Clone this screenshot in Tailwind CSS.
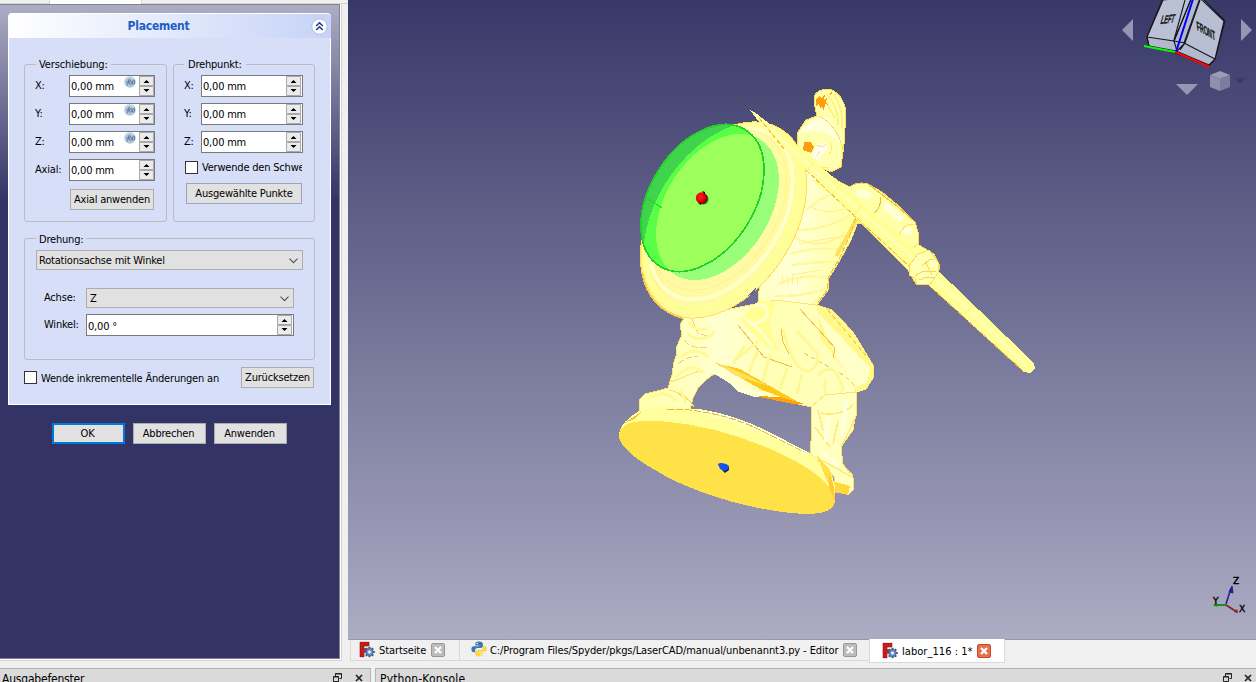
<!DOCTYPE html>
<html lang="de">
<head>
<meta charset="utf-8">
<title>Placement</title>
<script src="https://cdn.jsdelivr.net/npm/@tailwindcss/browser@4"></script>
</head>
<body class="w-[1256px] h-[682px] overflow-hidden bg-[#f0f0f0] text-black text-[11px] leading-[14px] tracking-[-0.2px] font-['DejaVu_Sans_Condensed','DejaVu_Sans',sans-serif] whitespace-nowrap">

<svg class="hidden">
  <defs>
    <symbol id="spin" viewBox="0 0 15 20">
      <path d="M.5.5h14v9H.5zM.5 10.500h14v9H.5z" fill="#ececec" stroke="#a9a9a9"/>
      <path d="M4.500 7L7.500 4l3 3zM4.500 13h6l-3 3z" fill="#000"/>
    </symbol>
    <symbol id="fx" viewBox="0 0 12 12">
      <circle cx="6" cy="6" r="5.700" fill="#b4c5d8"/>
      <path d="M1.500 3a5.500 5.500 0 0 1 9 0" fill="none" stroke="#d3dfec" stroke-width="1.500"/>
      <path d="M2.500 9.500Q4 9 4.200 6T6 3M2.500 6h3M6.500 4Q5 6 6 8.500M7 8.500l2.500-4M7.500 4.500L9 8.500M10 3.800q1.200 2 0 4.500" fill="none" stroke="#4a6f9c" stroke-width=".9"/>
    </symbol>
    <symbol id="freecad" viewBox="0 0 16 16">
      <path d="M1 .5h9v4H5v2.500h3v3H5v5.500H1z" fill="#c91c1c" stroke="#8c1010" stroke-width=".6"/>
      <g stroke="#3d5f96" stroke-width="2.200"><path d="M10.500 5.200v10.600M5.200 10.500h10.600M6.800 6.800l7.400 7.400M14.200 6.800l-7.400 7.400"/></g>
      <circle cx="10.500" cy="10.500" r="3.600" fill="#6d8fc4" stroke="#3d5f96" stroke-width=".8"/>
      <circle cx="10.500" cy="10.500" r="1.500" fill="#f4f4f4"/>
    </symbol>
    <symbol id="python" viewBox="0 0 16 16">
      <path d="M7.900.5C5 .5 4.300 1.600 4.300 2.900v1.700h3.900v.6H2.700C1.200 5.200.4 6.500.4 8.200s.9 3 2.200 3H4V9.400c0-1.300 1.100-2.400 2.400-2.400h3.500c1.100 0 2-.9 2-2V2.900C11.900 1.400 10.700.5 7.900.5z" fill="#3a77ad"/>
      <path d="M8.200 15.500c2.900 0 3.600-1.100 3.600-2.400v-1.700H7.900v-.6h5.500c1.500 0 2.300-1.300 2.300-3s-.9-3-2.200-3h-1.400v1.800c0 1.300-1.100 2.400-2.400 2.400H6.200c-1.100 0-2 .9-2 2v2.100c0 1.500 1.200 2.400 4 2.400z" fill="#fdd648"/>
      <circle cx="6.100" cy="2.500" r=".8" fill="#fff"/><circle cx="10" cy="13.500" r=".8" fill="#fff"/>
    </symbol>
    <symbol id="restore" viewBox="0 0 9 9">
      <path d="M2.500 3.500v-3h6v5h-2M2.500 1h6M.5 3.500h5v5h-5zM.5 4h5" fill="none" stroke="#222"/>
    </symbol>
    <symbol id="cross" viewBox="0 0 8 8"><path d="M1 1l6 6M7 1L1 7" stroke="#222" stroke-width="1.700"/></symbol>
    <symbol id="chev" viewBox="0 0 9 6"><path d="M.5.7l4 4 4-4" fill="none" stroke="#555" stroke-width="1.200"/></symbol>
  </defs>
</svg>

<div class="flex h-[668px]">
  <!-- Task panel -->
  <aside class="w-[348px] shrink-0">
    <div class="h-[4px] flex border-b border-[#d4d4d4]">
      <div class="w-[49px]"></div>
      <div class="w-[93px] bg-white border-x border-[#d4d4d4] h-[4px]"></div>
    </div>
    <div class="w-[342px] h-[657px] bg-white border-r border-b border-[#d4d4d4]">
    <div class="w-[340px] h-[655px] border-t border-r border-b border-[#82828c] bg-[linear-gradient(#adadc4_0px,#333366_196px)] pt-[8px] pl-[8px]">
      <div class="w-[323px] h-[25px] rounded-t-[4px] border-t border-l border-white bg-linear-to-r from-white to-[#c6d3f7] flex items-center">
        <div class="w-[299px] text-center text-[12px] font-bold text-[#215dc6] tracking-[-0.25px]">Placement</div>
        <svg class="ml-[3px]" width="17" height="17" viewBox="0 0 17 17"><circle cx="8.500" cy="8.500" r="7.700" fill="#fff" stroke="#b5bcd8"/><path d="M5.200 8l3.300-3.200L11.800 8M5.200 12l3.300-3.200 3.300 3.200" fill="none" stroke="#183c94" stroke-width="1.600"/></svg>
      </div>
      <div class="w-[323px] h-[367px] bg-[#d6dff7] border border-t-0 border-white pl-[15px] pt-[26px]">
        <div class="flex gap-[6px]">
          <fieldset class="w-[143px] h-[158px] border border-[#b9bcc0] rounded-[3px] pl-[11px]">
            <div class="w-fit bg-[#d6dff7] px-[3px] -mt-[7px] h-[14px] tracking-[-0.12px]">Verschiebung:</div>
            <div class="flex flex-col gap-[6px] mt-[3px]">
              <div class="flex"><span class="w-[33px] pt-[4px] -ml-px mr-px">X:</span><div class="w-[86px] h-[22px] bg-white border border-[#7a7a7a] flex pl-px"><span class="w-[53px] pt-[4px]">0,00 mm</span><svg width="12" height="12"><use href="#fx"/></svg><svg class="ml-[3px]" width="15" height="20"><use href="#spin"/></svg></div></div>
              <div class="flex"><span class="w-[33px] pt-[4px] -ml-px mr-px">Y:</span><div class="w-[86px] h-[22px] bg-white border border-[#7a7a7a] flex pl-px"><span class="w-[53px] pt-[4px]">0,00 mm</span><svg width="12" height="12"><use href="#fx"/></svg><svg class="ml-[3px]" width="15" height="20"><use href="#spin"/></svg></div></div>
              <div class="flex"><span class="w-[33px] pt-[4px] -ml-px mr-px">Z:</span><div class="w-[86px] h-[22px] bg-white border border-[#7a7a7a] flex pl-px"><span class="w-[53px] pt-[4px]">0,00 mm</span><svg width="12" height="12"><use href="#fx"/></svg><svg class="ml-[3px]" width="15" height="20"><use href="#spin"/></svg></div></div>
              <div class="flex"><span class="w-[33px] pt-[4px] -ml-px mr-px">Axial:</span><div class="w-[86px] h-[22px] bg-white border border-[#7a7a7a] flex pl-px"><span class="w-[68px] pt-[4px]">0,00 mm</span><svg width="15" height="20"><use href="#spin"/></svg></div></div>
            </div>
            <button class="ml-[34px] mt-[8px] w-[84px] h-[21px] block bg-[#e1e1e1] border border-[#adadad]">Axial anwenden</button>
          </fieldset>
          <fieldset class="w-[142px] h-[158px] border border-[#b9bcc0] rounded-[3px] pl-[10px]">
            <div class="w-fit bg-[#d6dff7] px-[4px] -mt-[7px] h-[14px]">Drehpunkt:</div>
            <div class="flex flex-col gap-[6px] mt-[3px]">
              <div class="flex"><span class="w-[17px] pt-[4px]">X:</span><div class="w-[102px] h-[22px] bg-white border border-[#7a7a7a] flex pl-px"><span class="w-[83px] pt-[4px]">0,00 mm</span><svg width="15" height="20"><use href="#spin"/></svg></div></div>
              <div class="flex"><span class="w-[17px] pt-[4px]">Y:</span><div class="w-[102px] h-[22px] bg-white border border-[#7a7a7a] flex pl-px"><span class="w-[83px] pt-[4px]">0,00 mm</span><svg width="15" height="20"><use href="#spin"/></svg></div></div>
              <div class="flex"><span class="w-[17px] pt-[4px]">Z:</span><div class="w-[102px] h-[22px] bg-white border border-[#7a7a7a] flex pl-px"><span class="w-[83px] pt-[4px]">0,00 mm</span><svg width="15" height="20"><use href="#spin"/></svg></div></div>
            </div>
            <div class="flex mt-[8px] ml-[1px]"><span class="size-[13px] bg-white border border-[#333]"></span><span class="ml-[4px] w-[100px] overflow-hidden">Verwende den Schwe</span></div>
            <button class="ml-[2px] mt-[8px] w-[116px] h-[21px] block bg-[#e1e1e1] border border-[#9aa7b5]">Ausgewählte Punkte</button>
          </fieldset>
        </div>
        <fieldset class="mt-[16px] w-[291px] h-[122px] border border-[#b9bcc0] rounded-[3px] pl-[11px]">
          <div class="w-fit bg-[#d6dff7] px-[3px] -mt-[6px] h-[14px]">Drehung:</div>
          <div class="mt-[3px] w-[267px] h-[20px] bg-[#e1e1e1] border border-[#adadad] flex items-center justify-between pl-[2px] pr-[4px] pt-[2px]"><span>Rotationsachse mit Winkel</span><svg width="9" height="6"><use href="#chev"/></svg></div>
          <div class="mt-[18px] ml-[8px] flex"><span class="w-[42px] pt-[3px]">Achse:</span><div class="w-[208px] h-[20px] bg-[#e1e1e1] border border-[#adadad] flex items-center justify-between pl-[3px] pr-[4px] pt-[2px]"><span>Z</span><svg width="9" height="6"><use href="#chev"/></svg></div></div>
          <div class="mt-[6px] ml-[8px] flex"><span class="w-[42px] pt-[4px]">Winkel:</span><div class="w-[208px] h-[22px] bg-white border border-[#7a7a7a] flex justify-between pl-px pr-px"><span class="pt-[5px]">0,00 °</span><svg width="15" height="20"><use href="#spin"/></svg></div></div>
        </fieldset>
        <div class="flex mt-[7px]"><span class="mt-[4px] size-[13px] bg-white border border-[#333]"></span><span class="mt-[5px] ml-[4px] w-[200px]">Wende inkrementelle Änderungen an</span><button class="w-[73px] h-[21px] bg-[#e1e1e1] border border-[#adadad] pt-px">Zurücksetzen</button></div>
      </div>
      <div class="flex gap-[8px] mt-[18px] ml-[44px]">
        <button class="w-[73px] h-[21px] bg-[#e1e1e1] border-2 border-[#0078d7] pt-px pr-[2px]">OK</button>
        <button class="w-[73px] h-[21px] bg-[#e1e1e1] border border-[#adadad] pt-px pr-[2px]">Abbrechen</button>
        <button class="w-[73px] h-[21px] bg-[#e1e1e1] border border-[#adadad] pt-px pr-[2px]">Anwenden</button>
      </div>
    </div>
    </div>
  </aside>

  <!-- 3D view and document tabs -->
  <main class="w-[908px]">
    <svg class="block" width="908" height="640" viewBox="348 0 908 640">
      <defs>
        <linearGradient id="bg" x1="0" y1="0" x2="0" y2="1"><stop offset="0" stop-color="#383869"/><stop offset="1" stop-color="#acacc4"/></linearGradient>
        <linearGradient id="sh" x1="1" y1="0" x2="0" y2="1"><stop offset="0" stop-color="#ffff8c"/><stop offset=".3" stop-color="#fffba4"/><stop offset=".75" stop-color="#fff9a4"/><stop offset="1" stop-color="#ffd733"/></linearGradient>
        <linearGradient id="torso" x1="0" y1="0" x2="1" y2=".2"><stop offset="0" stop-color="#ffffbc"/><stop offset=".4" stop-color="#ffffd8"/><stop offset=".8" stop-color="#ffffa6"/></linearGradient>
        <linearGradient id="leg" x1="0" y1="0" x2="1" y2="0"><stop offset="0" stop-color="#ffffac"/><stop offset=".35" stop-color="#ffffd0"/><stop offset=".6" stop-color="#ffffb4"/><stop offset="1" stop-color="#ffffc4"/></linearGradient>
        <radialGradient id="red" cx=".4" cy=".4" r=".6"><stop offset="0" stop-color="#ff2020"/><stop offset=".7" stop-color="#e80000"/><stop offset="1" stop-color="#700"/></radialGradient>
        <clipPath id="cs"><ellipse cx="724" cy="220" rx="70" ry="107" transform="rotate(32.800 724 220)"/></clipPath>
        <clipPath id="cl"><ellipse cx="702.500" cy="198" rx="52.400" ry="81" transform="rotate(32.400 702.500 198)"/></clipPath>
      </defs>
      <rect x="348" width="908" height="640" fill="url(#bg)"/>
      <rect x="348" y="639" width="908" height="1" fill="#9a9a9e"/>

      <g shape-rendering="crispEdges">
        <!-- raised arm -->
        <path d="M838 181L850 187Q858 181 868 184L882 192L900 207L915 222L918 232L919 245L934 254L940 266L937 278L928 285L916 284L908 270L893 255L862 224L850 222L838 205Z" fill="#ffffa8" stroke="#ffd94a"/>
        <path d="M857 196Q863 190 871 198M884 204L902 220M902 232Q905 228 911 232" stroke="#ffffda" stroke-width="7" fill="none"/>
        <path d="M880 197Q882 208 873 214M868 184L898 207L915 222" fill="none" stroke="#f2b93d"/>
        <path d="M917 243L912 252M898 237Q904 222 914 225" fill="none" stroke="#ffe05c"/>
        <!-- torso -->
        <path d="M795 150L817 168L836 179L861 214L851 240L840 260L829 278L828 290L817 305L832 310L853 332L873 365L873 378L866 389L857 392L810 406L770 388L758 295Z" fill="url(#torso)" stroke="#ffe66a"/>
        <path d="M806 211Q820 196 838 193M798 230Q826 230 852 214M794 237Q820 252 846 233M790 254Q815 246 842 250M791 266Q805 262 838 262M778 284Q807 272 829 279M774 296Q800 297 827 289M768 304Q800 318 820 298" fill="none" stroke="#fff99c" stroke-width="2.500"/>
        <path d="M811 207Q828 216 850 207M799 244Q822 239 849 236M792 275L821 270M782 284v-9M787 285v-9M792 284v-9M797 285v-8" fill="none" stroke="#fff08c"/>
        <path d="M857 218L848 235L836 256" fill="none" stroke="#ffe25c" stroke-width="4"/>
        <path d="M856 217L849 238L838 261L829 276L827 290L817 304" fill="none" stroke="#f5b942" stroke-dasharray="6 2"/>
        <path d="M812 180L838 184L851 206L842 198L822 190Z" fill="#ffff98"/>
        <!-- head -->
        <path d="M815 107L814 97Q817 89 828 89Q840 91 845 107L845 128L844 144L841 167L831 172L812 164L797 145L798 132L806 120L817 116Z" fill="#ffffb0" stroke="#ffdf4a"/>
        <path d="M799 133Q813 113 829 118Q841 134 843 149Q828 126 806 132Z" fill="#ffffdc"/>
        <path d="M834 94Q844 110 842 129M827 94Q839 109 838 125M823 97L835 118" fill="none" stroke="#fff07c" stroke-width="1.500"/>
        <path d="M819 116Q838 126 843 150" fill="none" stroke="#ffe04c"/>
        <path d="M816 100l4-5 1 4 4-5-1 6 4-4-2 6 2 3-3-1-1 7-2-4-2 1-1-5-3 3zM829 94l3-2-1 4zM804 142L811 142L814 147L811 153L803 150Z" fill="#ff9d0c"/>
        <path d="M817 145l8-3 3 6-6 8-5 4-5-4z" fill="#fffdf0"/>
        <path d="M817 145l5 2 5-3M817 156l3-5M829 142q6 6 0 12M812 161q9 9 17 6" fill="none" stroke="#ffe77a"/>
        <!-- rear leg, skirt and thigh -->
        <path d="M684 318L680 325L682 335L676 348L677 353L674 362L672 375L668 388L657 391L645 394L640 399L639 413L690 410L693 398L698 388L706 380L714 374L720 375L745 392L811 407L812 430L811 454L835 478L839 487L852 485L853 475L840 463L841 447L853 430L856 413L855 390L873 378L872 365L838 323L816 305L775 300L710 313Z" fill="url(#leg)" stroke="#ffe66a"/>
        <path d="M817 306L833 311L853 332L873 365L873 378L865 390L857 392L853 382L820 338Z" fill="#fff98c"/>
        <path d="M816 312L844 340L870 368L867 383L856 387L838 360Z" fill="#ffffc8"/>
        <path d="M800 309L835 348L833 358M781 329L783 342L791 358M738 325L764 357L792 367" fill="none" stroke="#f2c048"/>
        <path d="M804 353L845 376L855 386M827 309L848 334L868 358" fill="none" stroke="#f7c850" stroke-dasharray="5 3"/>
        <path d="M783 330Q788 350 797 365M797 331L817 353Q821 364 810 371Q798 372 790 353M771 314L766 333L777 348M818 376Q827 365 836 372L843 388Q839 402 832 403Q822 391 826 380M759 341L735 360M770 354L763 381M787 368L780 389M802 374L797 394M745 345L733 364M758 350L749 372" fill="none" stroke="#fff896" stroke-width="3"/>
        <path d="M740 320L758 301L776 301L770 324L777 350L765 346Z" fill="#ffff94"/>
        <path d="M754 306Q766 302 768 312Q764 324 750 324M744 318L760 330L772 346" fill="none" stroke="#ffffd0" stroke-width="3"/>
        <path d="M715 363L740 369L800 403L792 401L762 390Z" fill="#ffc91c"/>
        <path d="M715 362L735 370L769 386L736 376Z" fill="#ffe25b"/>
        <path d="M755 396L780 397L805 404L793 404Z" fill="#ffa20b"/>
        <path d="M712 372L727 371L738 383L770 395L755 397L739 392L729 383Z" fill="#ffffcf"/>
        <path d="M684 340Q692 350 708 347M692 319L698 333L710 337M678 364Q687 356 698 357" fill="none" stroke="#f9d25e" stroke-dasharray="7 2"/>
        <path d="M671 382L699 371M669 390Q686 393 694 407M678 394L690 401" fill="none" stroke="#ffdf68"/>
        <path d="M689 322q7 11 19 6M688 334q12 11 27-2M681 357q14-12 27 0M676 378q15-18 27-5M651 397q14-8 25 4M681 389L686 404" fill="none" stroke="#fff996" stroke-width="3"/>
        <!-- front shin and foot -->
        <path d="M811 407L812 430L810 453L835 477L834 488L848 495L853 490L853 478L843 464L841 447L849 431L857 414L856 392L825 395Z" fill="#ffffc0" stroke="#ffe26c"/>
        <path d="M815 427L830 447M821 413Q840 417 853 405M838 421L833 444M818 410l5 20M823 461L850 476" fill="none" stroke="#ffea78" stroke-width="1.500"/>
        <path d="M828 418L826 442M846 400L842 436M822 452L838 466" fill="none" stroke="#ffffe0" stroke-width="4"/>
        <path d="M832 481L850 486L848 495L834 492Z" fill="#ffd83e"/>
        <!-- base -->
        <path d="M619 434Q621 421 641 410L665 407L700 409Q735 415 765 430L808 452L830 472Q837 485 835 499L830 507Q822 514 805 514Z" fill="#ffff9e"/>
        <path d="M700 409Q735 415 765 430L808 452L804 455Q760 428 698 412Z" fill="#ffffc8"/>
        <path d="M667 409L690 410Q730 415 760 430L804 452" fill="none" stroke="#edb33a" stroke-dasharray="7 2"/>
        <path d="M623 424L641 412L636 418Z" fill="#f9bd30"/>
        <path d="M816 454L830 470L835 491L828 483Z" fill="#ffe04b"/>
        <path d="M619 437C618 422 638 420 660 421C720 425 780 450 810 470C828 482 836 493 835 502C832 512 822 514 803 514C752 511 690 492 655 470C635 459 620 446 619 437Z" fill="#ffe148"/>
        <path d="M829 472L834 487L835 501L829 487Z" fill="#ffc935"/>

        <!-- shield -->
        <ellipse cx="723.500" cy="220" rx="70.500" ry="107.500" transform="rotate(32.800 723.500 220)" fill="url(#sh)" stroke="#ffe04d"/>
        <g clip-path="url(#cs)" fill="none">
          <ellipse cx="723" cy="217" rx="65" ry="102" transform="rotate(32.800 723 217)" stroke="#ffff98" stroke-width="7"/>
          <ellipse cx="721" cy="214" rx="60" ry="94" transform="rotate(32.800 721 214)" stroke="#ffffc8" stroke-width="4"/>
          <ellipse cx="719" cy="210" rx="57" ry="88" transform="rotate(32.800 719 210)" stroke="#fff294"/>
        </g>
        <path d="M642 272Q649 309 683 318" fill="none" stroke="#ffcf45" stroke-width="2"/>
        <path d="M746 297L756 288L755 293Z" fill="#686891"/>

        <!-- bounding cylinder -->
        <ellipse cx="702.500" cy="198" rx="52.400" ry="81" transform="rotate(32.400 702.500 198)" fill="#3fd44b"/>
        <g clip-path="url(#cl)"><ellipse cx="724" cy="218" rx="68" ry="105" transform="rotate(32.800 724 218)" fill="#58ff46"/></g>
        <ellipse cx="717.500" cy="207" rx="52" ry="80" transform="rotate(32.400 717.500 207)" fill="#99ff7b"/>
        <g clip-path="url(#cl)"><ellipse cx="717.500" cy="207" rx="52" ry="80" transform="rotate(32.400 717.500 207)" fill="#9cff5b"/></g>
        <ellipse cx="702.500" cy="198" rx="52" ry="80.500" transform="rotate(32.400 702.500 198)" fill="none" stroke="#20cf28" stroke-width="1.700"/>
        <path d="M645 197L662 208" stroke="#20d529"/>

        <!-- spear -->
        <path d="M750 110L754 112L790 139L861 202L925 258L1034 363L1035 369L1030 373L1024 372L910 268L854 217L804 167L765 130Z" fill="#ffff98"/>
        <path d="M756 115L806 163L855 206L921 265L1028 366" fill="none" stroke="#ffffb4" stroke-width="3"/>
        <path d="M759 118L785 150M806 170L862 223L910 267M932 288L1023 371" fill="none" stroke="#f4bd3d" stroke-dasharray="5 2"/>
        <path d="M813 163L807 171M842 184L832 194M862 205L854 216M973 306L965 314" fill="none" stroke="#fff07c"/>
        <!-- hand -->
        <path d="M909 266L918 254L929 250L939 263L938 273L930 284L917 284L915 278L909 275Z" fill="#ffffb4" stroke="#ffdc58"/>
        <path d="M922 266l7-6 6-1M915 276q8-7 21-4M919 280l8-3 7 1M926 263l6 12" fill="none" stroke="#f9d45c"/>
      </g>

      <circle cx="703" cy="199" r="5.500" fill="#3f5d27"/><circle cx="701.500" cy="198" r="5.700" fill="url(#red)"/><path d="M702 191l3 1v3zM698 203l3 2v-2z" fill="#111"/>
      <path d="M718 464L722 470L725 473L729 470V466Z" fill="#06235c"/><path d="M718 464Q720 462 726 464Q729 465 729 468L725 471L720 469Z" fill="#1255f0"/>

      <!-- navigation cube -->
      <g stroke="#15151d" stroke-width="1.100" stroke-linejoin="round">
        <path d="M1163-2L1147 37L1149 46L1175 53L1209 66L1215 59L1225 21L1202-2Z" fill="#b3b9cc"/>
        <path d="M1163 0L1147 37L1174 41L1192-3Z" fill="#bbc1d4"/>
        <path d="M1201-1L1224 21L1215 59L1184 43L1200-2Z" fill="#b9bfd3"/>
        <path d="M1191-1L1174 41L1177 51L1185 43L1200 0M1174 41L1185 43L1180 50M1147 37L1149 46L1176 51L1209 65L1215 59M1185 0L1174 40" fill="none"/>
      </g>
      <text transform="matrix(.9 -.1 -.28 1 1160 24)" font-family="Liberation Sans" font-size="12" font-weight="bold" textLength="15" lengthAdjust="spacingAndGlyphs" stroke="#171719" stroke-width=".4" fill="#171719">LEFT</text>
      <text transform="matrix(.84 .48 .1 1 1197 30)" font-family="Liberation Sans" font-size="13" font-weight="bold" textLength="22" lengthAdjust="spacingAndGlyphs" stroke="#171719" stroke-width=".4" fill="#171719">FRONT</text>
      <path d="M1193-1L1176 52" stroke="#0000ff" stroke-width="2"/><path d="M1144 46L1175 52" stroke="#00ff00" stroke-width="2"/><path d="M1175 52L1210 67" stroke="#ff0000" stroke-width="2"/>
      <path d="M1133 19v22l-11-11zM1241 19v22l11-11zM1176 84h22l-11 11z" fill="#9696b4"/>
      <path d="M1210 75L1220 71L1230 75L1220 79Z" fill="#9b9bb8"/><path d="M1210 75L1220 79V91L1210 87Z" fill="#8f8fae"/><path d="M1230 75L1220 79V91L1230 87Z" fill="#7c7ca0"/>
      <path d="M1234 78h12l-6 6z" fill="#3e3e5c"/>

      <!-- axis cross -->
      <path d="M1226 604L1231 588" stroke="#22228b" stroke-width="1.500"/><path d="M1229 592L1232 586L1233 593Z" fill="#22228b" stroke="#22228b"/>
      <path d="M1226 605H1214" stroke="#159015" stroke-width="2"/><path d="M1213 605l4-2v4z" fill="#159015"/>
      <path d="M1226 605L1237 612" stroke="#8b2020" stroke-width="1.500"/><path d="M1234 612l3-3 1 4z" fill="#8b2020"/>
      <g font-family="DejaVu Sans" font-size="9" fill="#000" stroke="#000" stroke-width=".4"><text x="1233" y="584">Z</text><text x="1213" y="604">Y</text><text x="1239" y="612">X</text></g>
    </svg>
    <div class="flex items-start pl-[2px]">
      <div class="flex w-[110px] h-[21px] border border-t-0 border-[#d9d9d9] pl-[8px] pt-[1px]"><svg width="16" height="17" viewBox="0 0 16 16"><use href="#freecad"/></svg><span class="ml-[4px] mt-[3px] w-[52px] tracking-[-0.1px]">Startseite</span>
        <svg width="14" height="14" class="mt-[2px]" viewBox="0 0 14 14"><rect x=".5" y=".5" width="13" height="13" rx="1.500" fill="#bdbdbd" stroke="#979797"/><path d="M4 4l6 6M10 4l-6 6" stroke="#fff" stroke-width="2.200"/></svg></div>
      <div class="flex w-[409px] h-[21px] border-b border-[#d9d9d9] pl-[11px] pt-[1px]"><svg width="16" height="16"><use href="#python"/></svg><span class="ml-[3px] mt-[3px] w-[353px] tracking-[-0.095px]">C:/Program Files/Spyder/pkgs/LaserCAD/manual/unbenannt3.py - Editor</span>
        <svg width="14" height="14" class="mt-[2px]" viewBox="0 0 14 14"><rect x=".5" y=".5" width="13" height="13" rx="1.500" fill="#bdbdbd" stroke="#979797"/><path d="M4 4l6 6M10 4l-6 6" stroke="#fff" stroke-width="2.200"/></svg></div>
      <div class="flex w-[136px] h-[24px] -mt-px bg-white border border-t-0 border-[#d9d9d9] pl-[12px] pt-[3px]"><svg width="16" height="17" viewBox="0 0 16 16"><use href="#freecad"/></svg><span class="ml-[4px] mt-[3px] w-[75px] tracking-[0.05px]">labor_116 : 1*</span>
        <svg width="14" height="14" class="mt-[2px]" viewBox="0 0 14 14"><rect x=".5" y=".5" width="13" height="13" rx="1.500" fill="#e2724d" stroke="#cf4526"/><path d="M4 4l6 6M10 4l-6 6" stroke="#fff" stroke-width="2.200"/></svg></div>
    </div>
  </main>
</div>

<!-- Dock title bars -->
<div class="flex gap-[4px] h-[14px] overflow-hidden text-[12px] tracking-[-0.2px]">
  <div class="w-[371px] h-[20px] bg-[#dadada] border-t border-r border-[#b4b4b4] flex pl-[2px]"><span class="w-[331px] pt-[3px]">Ausgabefenster</span><svg class="mt-[4px]" width="9" height="9"><use href="#restore"/></svg><svg class="mt-[5px] ml-[13px]" width="8" height="8"><use href="#cross"/></svg></div>
  <div class="w-[881px] h-[20px] bg-[#dadada] border-t border-l border-[#b4b4b4] flex pl-[4px]"><span class="w-[843px] pt-[3px] tracking-[0.15px]">Python-Konsole</span><svg class="mt-[4px]" width="9" height="9"><use href="#restore"/></svg><svg class="mt-[5px] ml-[12px]" width="8" height="8"><use href="#cross"/></svg></div>
</div>
</body>
</html>
